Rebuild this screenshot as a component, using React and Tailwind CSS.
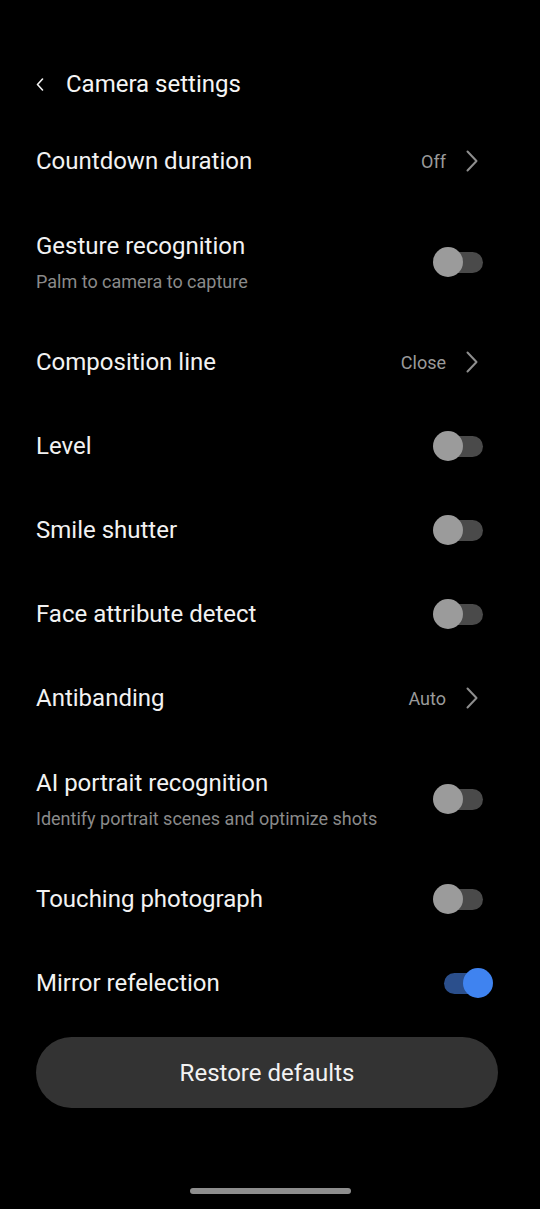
import React from "react";

function Chevron() {
  return (
    <svg width="12" height="22" viewBox="0 0 12 22" className="mr-[26px] shrink-0">
      <polyline points="1.5,1.5 10.5,11 1.5,20.5" fill="none" stroke="#8e8e8e" strokeWidth="2" strokeLinecap="round" strokeLinejoin="round" />
    </svg>
  );
}

function Toggle({ on }) {
  return (
    <div className="relative w-[60px] h-[30px] mr-[11px] shrink-0">
      {on ? (
        <>
          <div className="absolute left-[11px] top-[5px] w-[42px] h-[21px] rounded-full bg-[#2b4f8c]" />
          <div className="absolute right-0 top-0 w-[30px] h-[30px] rounded-full bg-[#3f83f0]" />
        </>
      ) : (
        <>
          <div className="absolute left-[8px] top-[5px] w-[42px] h-[21px] rounded-full bg-[#4a4a4a]" />
          <div className="absolute left-0 top-0 w-[30px] h-[30px] rounded-full bg-[#9b9b9b]" />
        </>
      )}
    </div>
  );
}

function Row({ title, sub, value, toggle, on }) {
  return (
    <div className={`flex items-center pl-[36px] pr-[36px] ${sub ? "h-[117px]" : "h-[84px]"}`}>
      <div className="flex-1 flex flex-col">
        <div className="text-[24px] leading-[28px] text-[#f2f2f2]">{title}</div>
        {sub && <div className="mt-[11px] text-[18px] leading-[21px] text-[#8a8a8a]">{sub}</div>}
      </div>
      {value && (
        <>
          <div className="text-[18px] text-[#9a9a9a] mr-[20px]">{value}</div>
          <Chevron />
        </>
      )}
      {toggle && <Toggle on={on} />}
    </div>
  );
}

export default function App() {
  return (
    <div className="w-[540px] h-[1209px] bg-black overflow-hidden" style={{ fontFamily: "Roboto, 'Noto Sans', sans-serif" }}>
      <div className="pt-[52px]">
        <div className="h-[64px] flex items-center pl-[36px]">
          <svg width="8" height="13" viewBox="0 0 8 13" className="shrink-0">
            <polyline points="6.5,1 1.5,6.5 6.5,12" fill="none" stroke="#f2f2f2" strokeWidth="1.6" strokeLinecap="round" strokeLinejoin="round" />
          </svg>
          <div className="ml-[22px] text-[24px] text-[#f5f5f5]">Camera settings</div>
        </div>
        <div className="mt-[3px]">
          <Row title="Countdown duration" value="Off" />
          <Row title="Gesture recognition" sub="Palm to camera to capture" toggle />
          <Row title="Composition line" value="Close" />
          <Row title="Level" toggle />
          <Row title="Smile shutter" toggle />
          <Row title="Face attribute detect" toggle />
          <Row title="Antibanding" value="Auto" />
          <Row title="AI portrait recognition" sub="Identify portrait scenes and optimize shots" toggle />
          <Row title="Touching photograph" toggle />
          <Row title="Mirror refelection" toggle on />
        </div>
        <div className="mt-[12px] mx-[36px] w-[462px] h-[71px] rounded-full bg-[#333333] flex items-center justify-center">
          <span className="text-[24px] text-[#f2f2f2]">Restore defaults</span>
        </div>
        <div className="mt-[80px] mx-auto w-[161px] h-[6px] rounded-full bg-[#8e8e8e]" />
      </div>
    </div>
  );
}
